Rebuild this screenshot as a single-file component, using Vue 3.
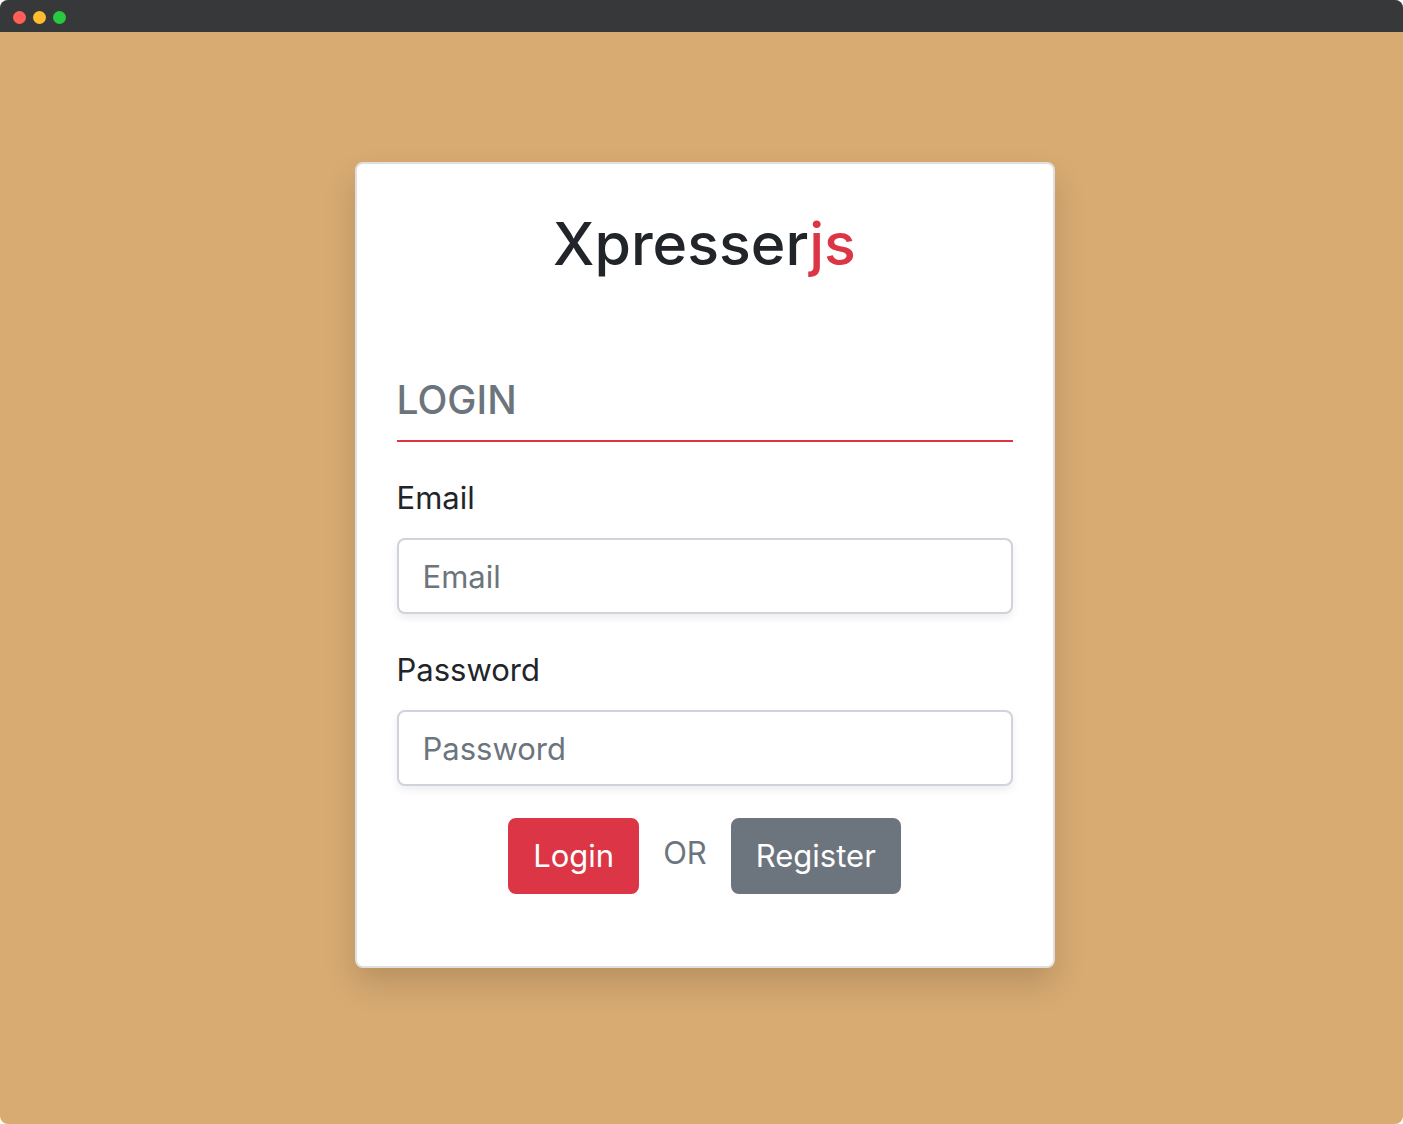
<script setup>
import { ref } from 'vue'

const email = ref('')
const password = ref('')
</script>

<template>
  <div class="window">
    <header class="titlebar">
      <span class="dot close"></span>
      <span class="dot minimize"></span>
      <span class="dot zoom"></span>
    </header>
    <main class="page">
      <section class="card">
        <h1 class="brand">Xpresser<span>js</span></h1>
        <form @submit.prevent>
          <h2 class="heading">LOGIN</h2>
          <div class="field">
            <label for="email">Email</label>
            <input id="email" v-model="email" type="email" placeholder="Email" />
          </div>
          <div class="field">
            <label for="password">Password</label>
            <input id="password" v-model="password" type="password" placeholder="Password" />
          </div>
          <div class="actions">
            <button class="primary" type="submit">Login</button>
            <span class="or">OR</span>
            <button class="secondary" type="button">Register</button>
          </div>
        </form>
      </section>
    </main>
  </div>
</template>

<style>
body {
  background: #fff;
}
</style>

<style scoped>
* {
  box-sizing: border-box;
}

.window {
  display: flex;
  flex-direction: column;
  min-height: 100vh;
  overflow: hidden;
  border-radius: 8px;
  background: #d8ab72;
  color: #212529;
  font-family: Inter, "Liberation Sans", sans-serif;
  font-size: 31px;
  line-height: 48px;
}

.titlebar {
  display: flex;
  align-items: center;
  gap: 7px;
  height: 32px;
  padding: 2px 13px 0;
  background: #37383a;
}

.dot {
  width: 13px;
  height: 13px;
  border-radius: 50%;
}

.close {
  background: #ff5f57;
}

.minimize {
  background: #febc2e;
}

.zoom {
  background: #28c840;
}

.page {
  flex: 1;
  padding: 130px 24px 130px 30px;
}

.card {
  width: 100%;
  max-width: 700px;
  margin: 0 auto;
  padding: 40px 40px 72px;
  border: 2px solid #dfdfdf;
  border-radius: 8px;
  background: #fff;
  box-shadow: 0 16px 32px rgba(0, 0, 0, 0.15);
}

.brand {
  margin: 0 0 92px;
  font-size: 59px;
  font-weight: 500;
  line-height: 80px;
  text-align: center;
}

.brand span {
  color: #dc3545;
}

.heading {
  margin: 0 0 32px;
  padding-bottom: 16px;
  border-bottom: 2px solid #dc3545;
  color: #6c757d;
  font-size: 39px;
  font-weight: 500;
  line-height: 48px;
}

.field {
  margin-bottom: 32px;
}

.field label {
  display: block;
  margin-bottom: 16px;
}

.field input {
  display: block;
  width: 100%;
  height: 76px;
  padding: 12px 24px;
  border: 2px solid #ced4da;
  border-radius: 8px;
  background: #fff;
  box-shadow: 0 4px 8px rgba(0, 0, 0, 0.075);
  color: #495057;
  font: inherit;
}

.field input::placeholder {
  color: #6c757d;
  opacity: 1;
}

.actions {
  display: flex;
  justify-content: center;
  gap: 24px;
}

.actions button {
  height: 76px;
  padding: 0 23px;
  border: 2px solid;
  border-radius: 8px;
  color: #fff;
  font: inherit;
}

.actions .primary {
  border-color: #dc3545;
  background: #dc3545;
}

.actions .secondary {
  border-color: #6c757d;
  background: #6c757d;
}

.or {
  line-height: 70px;
  color: #6c757d;
}
</style>
